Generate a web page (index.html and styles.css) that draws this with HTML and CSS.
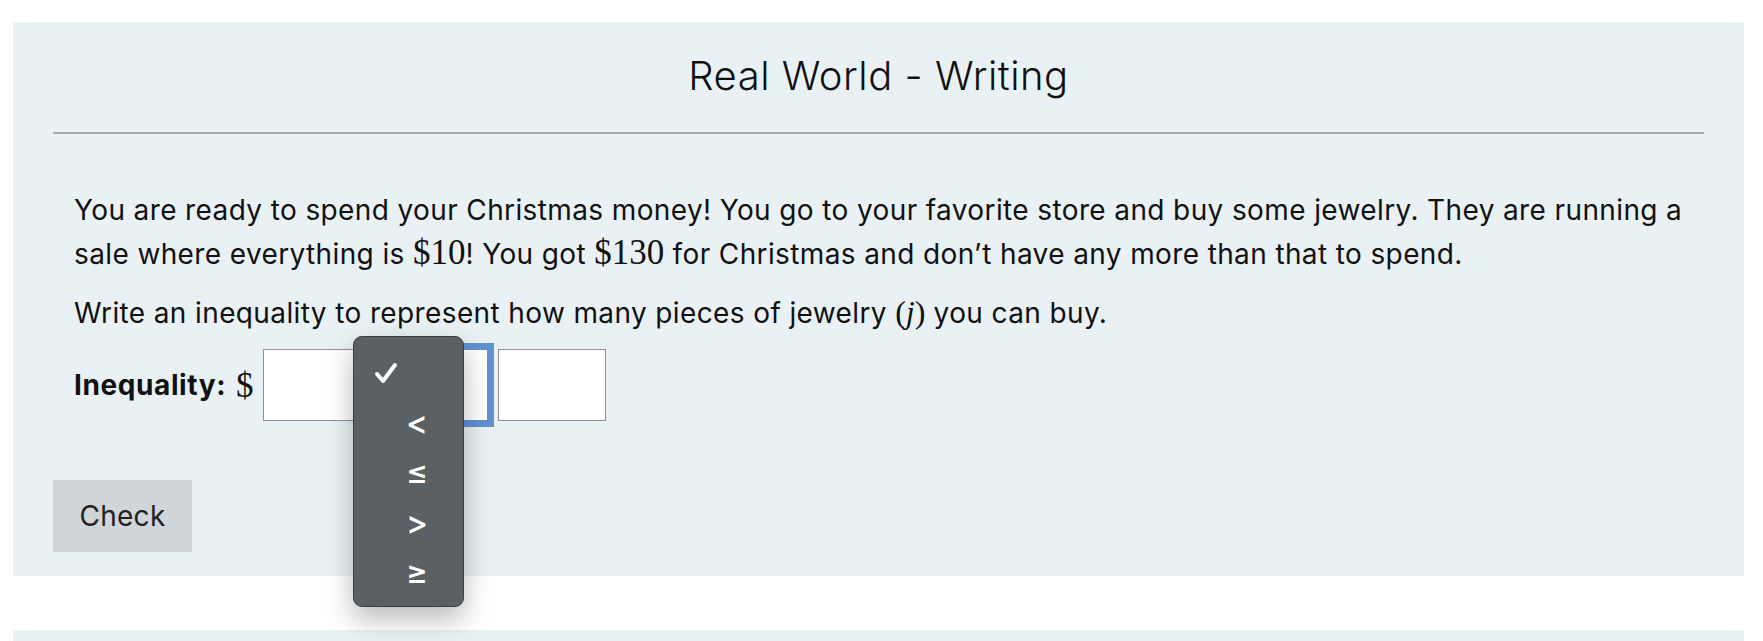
FILE: index.html
```html
<!DOCTYPE html>
<html>
<head>
<meta charset="utf-8">
<link rel="stylesheet" href="styles.css">
</head>
<body>
<div class="panel">
  <h2 class="title">Real World - Writing</h2>
  <div class="rule"></div>
  <div class="content">
    <p class="para">You are ready to spend your Christmas money! You go to your favorite store and buy some jewelry. They are running a sale where everything is <span class="math">$10</span>! You got <span class="math">$130</span> for Christmas and don’t have any more than that to spend.</p>
    <p class="para second">Write an inequality to represent how many pieces of jewelry <span class="math paren">(<i>j</i>)</span> you can buy.</p>
    <div class="row">
      <span class="label">Inequality:</span>
      <span class="math dollar">$</span>
      <div class="box first"></div>
      <div class="box select"></div>
      <div class="box third"></div>
      <div class="popup">
        <div class="opt opt-check">
          <svg width="24" height="22" viewBox="0 0 24 22"><path d="M3 12 L9 19 L21 3" fill="none" stroke="#fff" stroke-width="4" stroke-linecap="round" stroke-linejoin="round"/></svg>
        </div>
        <div class="opt">&lt;</div>
        <div class="opt">≤</div>
        <div class="opt">&gt;</div>
        <div class="opt">≥</div>
      </div>
    </div>
  </div>
  <button class="check">Check</button>
</div>
<div class="panel next"></div>
</body>
</html>
```
FILE: styles.css
```css
html, body {
  margin: 0;
  padding: 0;
  background: #ffffff;
  font-family: Inter, "Noto Sans", sans-serif;
  color: #111;
  overflow: hidden;
}
.panel {
  margin: 22px 19px 0 13px;
  background: #e9f1f4;
  padding: 31px 40px 24px 40px;
  box-sizing: border-box;
  height: 554px;
}
.panel.next {
  margin-top: 54px;
  height: 40px;
  padding: 0;
}
.title {
  margin: 0;
  text-align: center;
  font-size: 40px;
  line-height: 46px;
  font-weight: 300;
  letter-spacing: 0.5px;
  color: #111;
}
.rule {
  margin-top: 33px;
  height: 2px;
  background: #a5aaac;
}
.content {
  padding: 0 0 0 21px;
  margin-top: 54px;
}
.para {
  margin: 0;
  font-size: 28px;
  line-height: 44px;
  letter-spacing: 0.38px;
  color: #111;
}
.para.second {
  margin-top: 15px;
}
.math {
  font-family: "Liberation Serif", serif;
  font-size: 35px;
  line-height: 1;
  letter-spacing: 0;
}
.math.paren {
  font-size: 32px;
}
.math i {
  font-style: italic;
}
.row {
  position: relative;
  margin-top: 14px;
  height: 72px;
  display: flex;
  align-items: center;
}
.label {
  font-weight: 700;
  font-size: 28px;
  letter-spacing: 0.6px;
  width: 154px;
  white-space: nowrap;
}
.dollar {
  margin-left: 8px;
  width: 17px;
}
.box {
  height: 72px;
  width: 108px;
  box-sizing: border-box;
  background: #fff;
  border: 1px solid #8e9295;
}
.first {
  margin-left: 10px;
}
.select {
  margin-left: 9px;
  box-shadow: 0 0 0 6px #6092d0;
  border-color: #6092d0;
}
.third {
  margin-left: 10px;
}
.popup {
  position: absolute;
  left: 279px;
  top: -13px;
  width: 111px;
  height: 271px;
  box-sizing: border-box;
  background: #5b6064;
  border: 1px solid #3b3e41;
  border-radius: 9px;
  box-shadow: 0 12px 28px rgba(0, 0, 0, 0.28);
  padding-top: 11px;
  color: #fff;
}
.opt {
  height: 50px;
  display: flex;
  align-items: center;
  padding-left: 52px;
  font-size: 33px;
  font-weight: 500;
  font-family: Inter, sans-serif;
}
.opt-check {
  padding-left: 20px;
  height: 49px;
}
.check {
  margin-top: 59px;
  width: 139px;
  height: 72px;
  border: none;
  background: #d0d5d9;
  color: #222;
  font-family: Inter, sans-serif;
  font-size: 28px;
  letter-spacing: 0.3px;
  padding: 0;
}
```
